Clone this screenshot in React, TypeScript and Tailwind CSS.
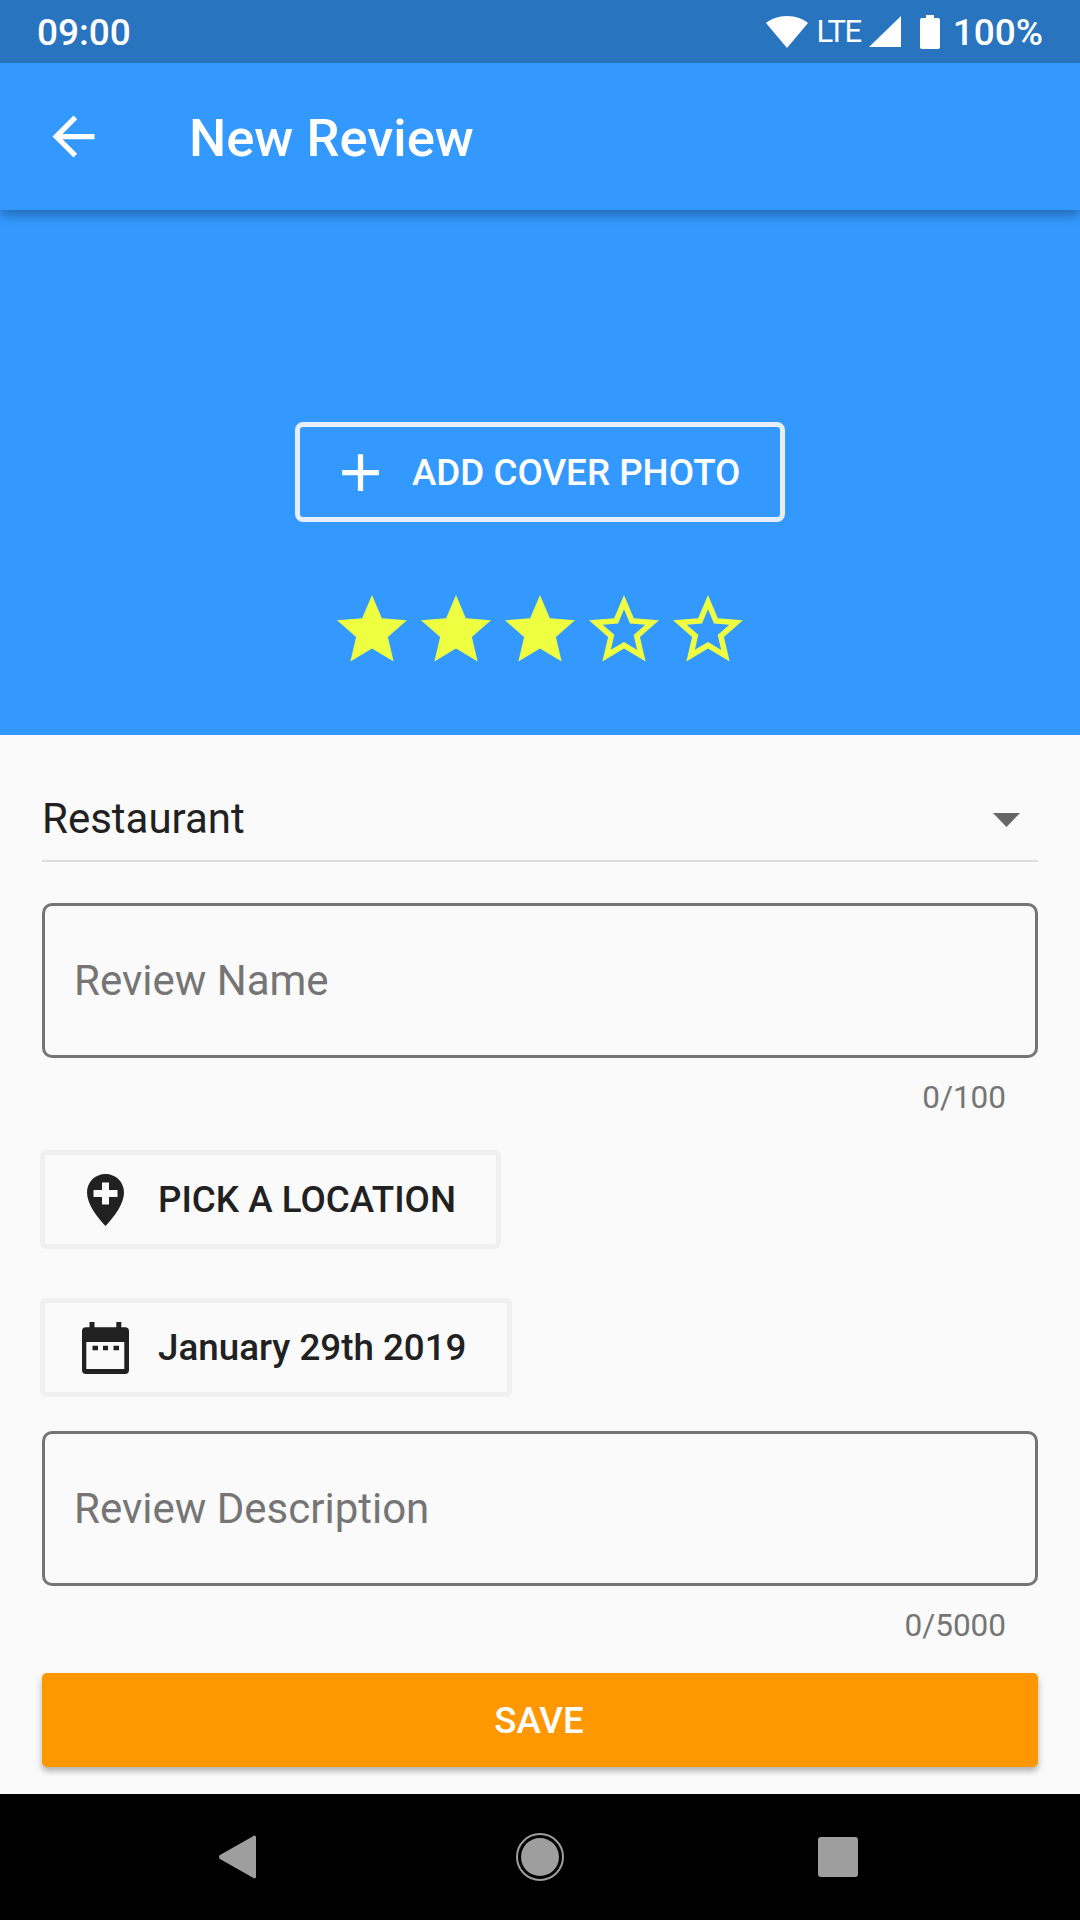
function Star({ filled }: { filled: boolean }) {
  return (
    <svg width="84" height="84" viewBox="0 0 24 24" fill="#eeff41">
      {filled ? (
        <path d="M12 17.27L18.18 21l-1.64-7.03L22 9.24l-7.19-.61L12 2 9.19 8.63 2 9.24l5.46 4.73L5.82 21z" />
      ) : (
        <path d="M22 9.24l-7.19-.62L12 2 9.19 8.63 2 9.24l5.46 4.73L5.82 21 12 17.27 18.18 21l-1.63-7.03L22 9.24zM12 15.4l-3.76 2.27 1-4.28-3.32-2.88 4.38-.38L12 6.1l1.71 4.04 4.38.38-3.32 2.88 1 4.28L12 15.4z" />
      )}
    </svg>
  );
}

function OutlinedField({ label, count }: { label: string; count: string }) {
  return (
    <div>
      <div className="h-[155px] flex items-center px-[29px] border-[3px] border-[#757575] rounded-[10px]">
        <span className="text-[42px] text-[#757575]">{label}</span>
      </div>
      <div className="h-[56px] mt-[12px] pr-[32px] flex items-center justify-end text-[31.5px] text-[#757575]">{count}</div>
    </div>
  );
}

export default function App() {
  return (
    <div className="w-[1080px] h-[1920px] flex flex-col bg-[#fafafa] overflow-hidden font-['Roboto',sans-serif]">
      <div className="h-[63px] shrink-0 bg-[#2874bf] flex items-center justify-between px-[37px] text-white text-[37px] font-medium">
        <span className="mt-[2px]">09:00</span>
        <div className="flex items-center">
          <svg width="42" height="32" viewBox="0 0 42 32" fill="#fff">
            <path d="M21 32L0 7C5 3 12 0 21 0s16 3 21 7z" />
          </svg>
          <span className="ml-[9px] mt-[2px] text-[31px] font-normal tracking-[-1.5px]">LTE</span>
          <svg className="ml-[8px]" width="32" height="31" viewBox="0 0 32 31" fill="#fff">
            <path d="M32 0v31H0z" />
          </svg>
          <svg className="ml-[19px]" width="20" height="34" viewBox="0 0 20 34" fill="#fff">
            <path d="M6 0h8v3h4a2 2 0 0 1 2 2v27a2 2 0 0 1-2 2H2a2 2 0 0 1-2-2V5a2 2 0 0 1 2-2h4z" />
          </svg>
          <span className="ml-[13px] mt-[2px]">100%</span>
        </div>
      </div>

      <div className="h-[147px] shrink-0 bg-[#3399ff] flex items-center pl-[42px] text-white shadow-[0_6px_10px_rgba(0,0,0,0.28)] z-10">
        <svg width="63" height="63" viewBox="0 0 24 24" fill="#fff">
          <path d="M20 11H7.830l5.590-5.590L12 4l-8 8 8 8 1.410-1.410L7.830 13H20v-2z" />
        </svg>
        <span className="ml-[84px] mt-[4px] text-[52.5px] font-medium">New Review</span>
      </div>

      <div className="h-[525px] shrink-0 bg-[#3399ff] flex flex-col items-center pt-[212px]">
        <div className="w-[490px] h-[100px] flex items-center pl-[29px] border-[5px] border-[#e8eef5] rounded-[8px] text-white">
          <svg width="63" height="63" viewBox="0 0 24 24" fill="#fff">
            <path d="M19 13h-6v6h-2v-6H5v-2h6V5h2v6h6v2z" />
          </svg>
          <span className="ml-[20px] mt-[2px] text-[36.75px] font-medium">ADD COVER PHOTO</span>
        </div>
        <div className="flex mt-[66px] justify-center">
          <Star filled />
          <Star filled />
          <Star filled />
          <Star filled={false} />
          <Star filled={false} />
        </div>
      </div>

      <div className="flex-1 flex flex-col px-[42px]">
        <div className="h-[127px] shrink-0 flex items-center justify-between border-b-2 border-[#dedede] pt-[41px]">
          <span className="text-[42px] text-[#212121]">Restaurant</span>
          <svg className="mr-[18px] mt-[4px]" width="27" height="14" viewBox="0 0 27 14" fill="#666">
            <path d="M0 0h27L13.500 14z" />
          </svg>
        </div>
        <div className="mt-[41px]">
          <OutlinedField label="Review Name" count="0/100" />
        </div>
        <div className="mt-[24px] -ml-[2px] w-[461px] h-[99px] flex items-center pl-[42px] border-[5px] border-[#f0f0f0] rounded-[6px] text-[#212121]">
          <svg width="37" height="52" viewBox="0 0 37 52" fill="#212121">
            <path
              fillRule="evenodd"
              d="M18.500 0C8.300 0 0 8 0 18.500 0 30 10 43 18.500 52 27 43 37 30 37 18.500 37 8 28.700 0 18.500 0zM15 8.500h7V16h8.500v7H22v7.500h-7V23H6.500v-7H15z"
            />
          </svg>
          <span className="ml-[34px] text-[36.75px] font-medium">PICK A LOCATION</span>
        </div>
        <div className="mt-[49px] -ml-[2px] w-[472px] h-[99px] flex items-center pl-[37px] border-[5px] border-[#f0f0f0] rounded-[6px] text-[#212121]">
          <svg width="47" height="52" viewBox="0 0 47 52" fill="#212121">
            <path
              fillRule="evenodd"
              d="M7.500 0h5v5.300h21.800V0h5v5.300H43a4 4 0 0 1 4 4V48a4 4 0 0 1-4 4H4a4 4 0 0 1-4-4V9.300a4 4 0 0 1 4-4h3.500zM4.300 20v27h38V20zM10.500 23.700H16v4.600h-5.500zM21 23.700h5v4.600h-5zM31.500 23.700H37v4.600h-5.500z"
            />
          </svg>
          <span className="ml-[29px] text-[36.75px] font-medium">January 29th 2019</span>
        </div>
        <div className="mt-[34px]">
          <OutlinedField label="Review Description" count="0/5000" />
        </div>
        <div className="mt-[19px] h-[94px] shrink-0 flex items-center justify-center pr-[2px] pt-[2px] bg-[#ff9800] rounded-[5px] shadow-[0_4px_6px_rgba(0,0,0,0.3)] text-white text-[36.75px] font-medium">
          SAVE
        </div>
      </div>

      <div className="h-[126px] shrink-0 bg-black flex items-center">
        <svg className="ml-[219px]" width="38" height="44" viewBox="0 0 38 44" fill="#9e9e9e">
          <path d="M37 2v40a1.500 1.500 0 0 1-2.500 1L1 24a2.500 2.500 0 0 1 0-4L34.500 1A1.500 1.500 0 0 1 37 2z" />
        </svg>
        <svg className="ml-[259px]" width="48" height="48" viewBox="0 0 48 48">
          <circle cx="24" cy="24" r="23" fill="none" stroke="#9e9e9e" strokeWidth="2" />
          <circle cx="24" cy="24" r="19" fill="#9e9e9e" />
        </svg>
        <div className="ml-[254px] w-[40px] h-[40px] rounded-[3px] bg-[#9e9e9e]" />
      </div>
    </div>
  );
}
